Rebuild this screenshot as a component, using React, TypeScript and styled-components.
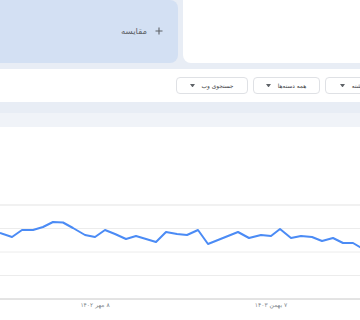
import React from "react";
import styled, { createGlobalStyle } from "styled-components";

const GlobalStyle = createGlobalStyle`
  html, body {
    margin: 0;
    padding: 0;
    background: #e8edf5;
    overflow: hidden;
    font-family: "DejaVu Sans", "Noto Sans", sans-serif;
  }
`;

const Page = styled.div`
  width: 360px;
  height: 320px;
  overflow: hidden;
  display: flex;
  flex-direction: column;
  background: #e8edf5;
`;

const TopRow = styled.div`
  display: grid;
  grid-template-columns: 178px 1fr;
  column-gap: 5px;
  height: 63px;
  flex-shrink: 0;
`;

const CompareCard = styled.div`
  direction: rtl;
  background: #d3e0f3;
  border-radius: 0 8px 8px 0;
  display: flex;
  align-items: center;
  justify-content: flex-start;
  gap: 8px;
  padding-right: 15px;
  padding-bottom: 1px;
  color: #5f6368;
  font-size: 8.5px;
`;

const PlusIcon = styled.svg`
  width: 8px;
  height: 8px;
  flex-shrink: 0;
`;

const TermCard = styled.div`
  background: #ffffff;
  border-radius: 0 0 0 8px;
`;

const Toolbar = styled.div`
  margin-top: 6px;
  height: 33px;
  background: #ffffff;
  flex-shrink: 0;
  overflow: hidden;
  display: flex;
  justify-content: flex-end;
`;

const ToolbarInner = styled.div`
  direction: rtl;
  display: flex;
  align-items: center;
  gap: 5px;
  margin-right: -41px;
`;

const Dropdown = styled.div<{ $w: number }>`
  width: ${(p) => p.$w}px;
  height: 17px;
  box-sizing: border-box;
  border: 1px solid #dfe1e5;
  border-radius: 4px;
  display: flex;
  align-items: center;
  justify-content: center;
  gap: 7px;
  padding: 0 2px 0 1px;
  font-size: 5.8px;
  color: #3c4043;
  white-space: nowrap;
`;

const Caret = styled.svg`
  width: 5px;
  height: 3.5px;
  flex-shrink: 0;
`;

const ChartCard = styled.div`
  margin-top: 11px;
  flex: 1;
  display: flex;
  flex-direction: column;
  background: #ffffff;
`;

const ChartHeader = styled.div`
  height: 14px;
  background: #f0f3f8;
  flex-shrink: 0;
`;

const ChartBody = styled.div`
  flex: 1;
`;

const ChartSvg = styled.svg`
  display: block;
  width: 360px;
  height: 193px;
`;

const points: [number, number][] = [
  [-5, 231], [0, 233], [12, 237], [22, 230], [33, 230], [43, 227], [53, 222],
  [63, 222.5], [73, 228], [85, 235], [95, 237], [105, 230], [115, 234],
  [126, 239], [136, 236], [146, 239], [156, 242], [166, 232], [177, 234],
  [187, 235], [198, 230], [208, 244], [218, 240], [228, 236], [238, 232],
  [249, 238], [261, 235], [271, 236], [280, 229], [291, 238], [301, 236],
  [312, 237], [322, 241], [333, 238], [343, 243], [353, 243], [363, 249],
];

const TOP = 127;

const Dropdowns: { label: string; w: number }[] = [
  { label: "۱۲ ماه گذشته", w: 76 },
  { label: "همه دسته‌ها", w: 67 },
  { label: "جستجوی وب", w: 72 },
];

export default function App() {
  const poly = points.map(([x, y]) => `${x},${y - TOP}`).join(" ");
  const grid = [205, 228.5, 252, 275.5];
  return (
    <>
      <GlobalStyle />
      <Page>
        <TopRow>
          <CompareCard>
            <PlusIcon viewBox="0 0 8 8">
              <path d="M4 0.5V7.5M0.5 4H7.5" stroke="#5f6368" strokeWidth="1.1" />
            </PlusIcon>
            <span>مقایسه</span>
          </CompareCard>
          <TermCard />
        </TopRow>
        <Toolbar>
          <ToolbarInner>
            {Dropdowns.map((d) => (
              <Dropdown key={d.label} $w={d.w}>
                <span>{d.label}</span>
                <Caret viewBox="0 0 6 4">
                  <path d="M0 0H6L3 4Z" fill="#5f6368" />
                </Caret>
              </Dropdown>
            ))}
          </ToolbarInner>
        </Toolbar>
        <ChartCard>
          <ChartHeader />
          <ChartBody>
            <ChartSvg viewBox="0 0 360 193">
              {grid.map((g, i) => (
                <line
                  key={g}
                  x1="0"
                  x2="360"
                  y1={g - TOP}
                  y2={g - TOP}
                  stroke={i === 0 ? "#e3e3e3" : "#ececec"}
                  strokeWidth="1"
                />
              ))}
              <line x1="0" x2="360" y1={299 - TOP} y2={299 - TOP} stroke="#c8c8c8" strokeWidth="1" />
              <polyline
                points={poly}
                fill="none"
                stroke="#4b8bf5"
                strokeWidth="2"
                strokeLinejoin="round"
                strokeLinecap="round"
              />
              <text x="95" y={307 - TOP} fontSize="6" fill="#80868b" textAnchor="middle" direction="rtl" fontFamily="DejaVu Sans, sans-serif">
                ۸ مهر ۱۴۰۲
              </text>
              <text x="271" y={307 - TOP} fontSize="6" fill="#80868b" textAnchor="middle" direction="rtl" fontFamily="DejaVu Sans, sans-serif">
                ۷ بهمن ۱۴۰۳
              </text>
            </ChartSvg>
          </ChartBody>
        </ChartCard>
      </Page>
    </>
  );
}
